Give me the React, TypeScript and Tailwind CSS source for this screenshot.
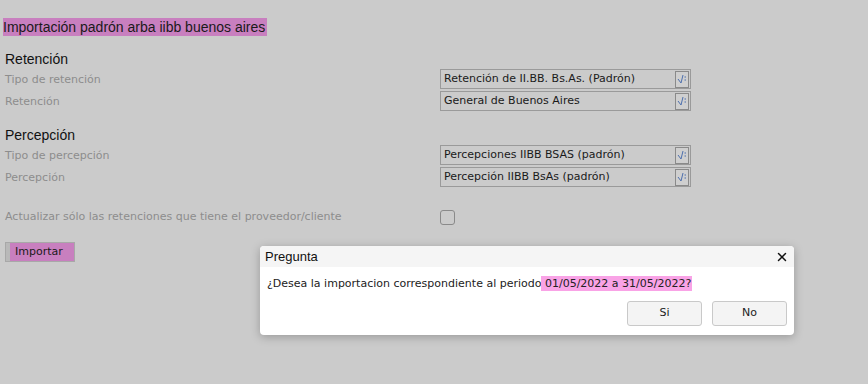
import { X } from "lucide-react";

const SelectBox = ({ value }: { value: string }) => (
  <div className="flex h-[20px] w-[251px] items-center border border-[#9a9a9a] bg-[#cbcbcb] pl-[3px]">
    <span className="flex-1 truncate text-[11px] text-[#1a1a1a]">{value}</span>
    <span className="mr-[1px] flex h-[17px] w-[14px] items-center justify-center border border-[#8a8a8a] bg-[#cfcfcf]">
      <svg width="11" height="12" viewBox="0 0 11 12">
        <path d="M1 6 L4 10 L6 2 M7.5 4 L9 4 M7.5 7 L9 7" stroke="#4d6fae" strokeWidth="1" fill="none" />
      </svg>
    </span>
  </div>
);

const FieldRow = ({ label, value }: { label: string; value: string }) => (
  <div className="flex h-[22px] items-center">
    <span className="mt-[3px] w-[435px] text-[11px] text-[#8d8d8d]">{label}</span>
    <SelectBox value={value} />
  </div>
);

const heading = { fontFamily: '"Liberation Sans", Arial, sans-serif' };

export default function App() {
  return (
    <div
      className="relative h-[384px] w-[868px] overflow-hidden bg-[#cbcbcb] pl-[3px]"
      style={{ fontFamily: '"DejaVu Sans", sans-serif' }}
    >
      <div className="pt-[15px]">
        <h1
          className="inline-block bg-[#c87fbf] pr-[2px] text-[14px] leading-[18px] text-[#1a1a1a]"
          style={heading}
        >
          Importación padrón arba iibb buenos aires
        </h1>

        <h2 className="mt-[12px] pl-[2px] text-[14px] leading-[17px] text-[#111]" style={heading}>
          Retención
        </h2>
        <div className="pl-[2px]">
          <FieldRow label="Tipo de retención" value="Retención de II.BB. Bs.As. (Padrón)" />
          <FieldRow label="Retención" value="General de Buenos Aires" />
        </div>

        <h2 className="mt-[15px] pl-[2px] text-[14px] leading-[17px] text-[#111]" style={heading}>
          Percepción
        </h2>
        <div className="pl-[2px]">
          <FieldRow label="Tipo de percepción" value="Percepciones IIBB BSAS (padrón)" />
          <FieldRow label="Percepción" value="Percepción IIBB BsAs (padrón)" />
        </div>

        <div className="mt-[18px] flex h-[22px] items-center pl-[2px]">
          <span className="w-[435px] text-[11px] text-[#8d8d8d]">
            Actualizar sólo las retenciones que tiene el proveedor/cliente
          </span>
          <span className="h-[15px] w-[15px] rounded-[3px] border border-[#8a8a8a]" />
        </div>

        <div className="mt-[14px] pl-[2px]">
          <button className="flex h-[20px] w-[70px] items-center border border-[#a8a8a8] bg-[#c87fbf] pl-[9px] text-[11px] text-[#1a1a1a] shadow-[inset_4px_0_0_#b9b9b9]">
            Importar
          </button>
        </div>
      </div>

      <div className="absolute left-[260px] top-[246px] w-[534px] overflow-hidden rounded-[4px] bg-white shadow-[0_2px_10px_rgba(0,0,0,0.25)]">
        <div className="flex h-[21px] items-center justify-between bg-[#f5f5f5] pl-[5px] pr-[5px]">
          <span className="text-[13px] text-[#111]" style={heading}>
            Pregunta
          </span>
          <X size={14} strokeWidth={2.5} className="text-[#111]" />
        </div>
        <div className="px-[7px] pt-[9px] text-[11px] text-[#222]">
          ¿Desea la importacion correspondiente al periodo
          <span className="bg-[#f9a3e6] py-[1px] pr-[1px]"> 01/05/2022 a 31/05/2022?</span>
        </div>
        <div className="flex justify-end gap-[10px] px-[7px] pb-[9px] pt-[8px]">
          <button className="h-[25px] w-[75px] rounded-[3px] border border-[#c9c9c9] bg-[#f4f4f4] text-[11px] text-[#222]">
            Si
          </button>
          <button className="h-[25px] w-[75px] rounded-[3px] border border-[#c9c9c9] bg-[#f4f4f4] text-[11px] text-[#222]">
            No
          </button>
        </div>
      </div>
    </div>
  );
}
